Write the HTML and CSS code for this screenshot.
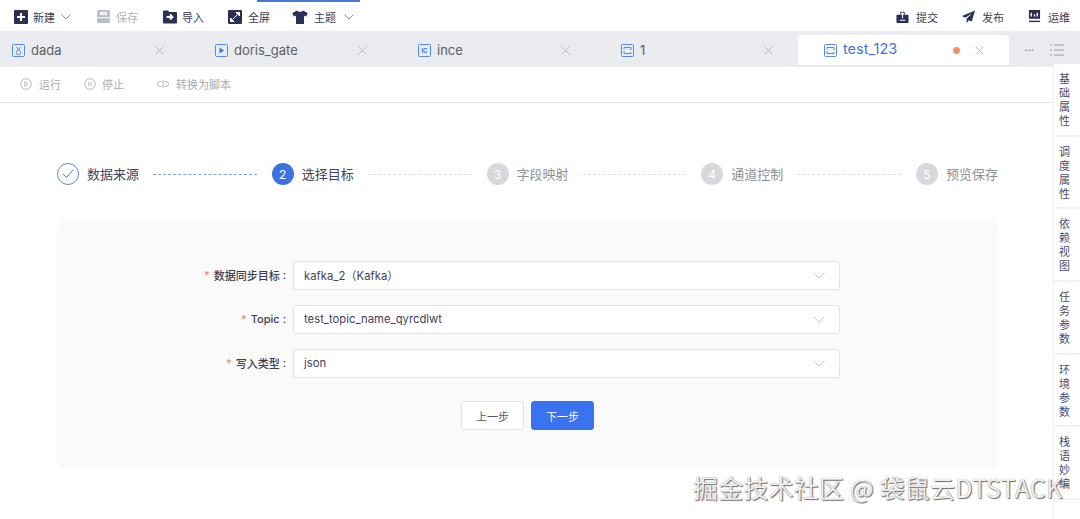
FILE: index.html
```html
<!DOCTYPE html>
<html lang="zh">
<head>
<meta charset="utf-8">
<title>数据同步</title>
<link rel="stylesheet" href="styles.css">
</head>
<body>
<div class="app">
  <div class="top-accent"></div>
  <header class="menubar">
    <div class="menu-group">
      <div class="menu-item m-new">
        <svg class="ic14" viewBox="0 0 14 14"><rect width="14" height="14" rx="1" fill="#2b2f55"/><path d="M7 3v8M3 7h8" stroke="#fff" stroke-width="2"/></svg>
        <span>新建</span>
        <svg class="chev" viewBox="0 0 10 6"><path d="M.5.5 5 5 9.500.5" fill="none" stroke="#8a8c92" stroke-width="1"/></svg>
      </div>
      <div class="menu-item m-save disabled">
        <svg class="ic14 save-ic" viewBox="0 0 14 14"><rect width="14" height="14" rx="1.500" fill="#b9bcc2"/><rect x="3" y="2" width="8" height="3.500" fill="#f0f0f0"/><rect x="0" y="7.500" width="14" height="1.500" fill="#f0f0f0"/></svg>
        <span>保存</span>
      </div>
      <div class="menu-item m-import">
        <svg class="ic14" viewBox="0 0 14 14"><path d="M0 1.500a1 1 0 0 1 1-1h4l1.500 1.500H13a1 1 0 0 1 1 1V12.500a1 1 0 0 1-1 1H1a1 1 0 0 1-1-1z" fill="#2b2f55"/><path d="M3.500 7h5M7 4.500 9.500 7 7 9.500" fill="none" stroke="#fff" stroke-width="1.800"/></svg>
        <span>导入</span>
      </div>
      <div class="menu-item m-full">
        <svg class="ic14" viewBox="0 0 14 14"><rect width="14" height="14" rx="1" fill="#2b2f55"/><path d="M8 2.500h3.500V6L8 2.500zM6 11.500H2.500V8L6 11.500zM9 5 5 9" fill="#fff" stroke="#fff" stroke-width="1"/></svg>
        <span>全屏</span>
      </div>
      <div class="menu-item m-theme">
        <svg class="ic16" viewBox="0 0 16 14"><path d="M5 .5 .3 3l1.500 3.500L4 5.800V14h8V5.800l2.200.7L15.700 3 11 .5C10 2.200 6 2.200 5 .5z" fill="#2b2f55"/></svg>
        <span>主题</span>
        <svg class="chev" viewBox="0 0 10 6"><path d="M.5.5 5 5 9.500.5" fill="none" stroke="#8a8c92" stroke-width="1"/></svg>
      </div>
    </div>
    <div class="menu-group right">
      <div class="menu-item">
        <svg class="ic13" viewBox="0 0 14 14"><path d="M5 2h4l1 3h2.500a1 1 0 0 1 1 1v7a1 1 0 0 1-1 1H1.500a1 1 0 0 1-1-1V6a1 1 0 0 1 1-1H4z" fill="#2b2f55"/><path d="M7 3v6M5 5l2-2 2 2M4 11h6" fill="none" stroke="#fff" stroke-width="1.200"/></svg>
        <span>提交</span>
      </div>
      <div class="menu-item">
        <svg class="ic13" viewBox="0 0 14 14"><path d="M14 .5 0 6.500l3.500 1.800L11 3.500 5 9.500V14l2.500-3 3 1.500z" fill="#2b2f55"/></svg>
        <span>发布</span>
      </div>
      <div class="menu-item">
        <svg class="ic13" viewBox="0 0 14 14"><path d="M1 0h12v9.500H1z" fill="#2b2f55"/><path d="M3.500 3v4M7 4.500V7M10 3v4" stroke="#fff" stroke-width="1.500"/><rect x="1" y="11.500" width="12" height="1.500" fill="#2b2f55"/></svg>
        <span>运维</span>
      </div>
    </div>
  </header>

  <nav class="tabbar">
    <div class="tabs">
      <div class="tab first">
        <svg class="tab-ic" viewBox="0 0 13 13"><rect x=".5" y=".5" width="12" height="12" rx="1" fill="#e4ecfa" stroke="#5d8ad6"/><circle cx="6.500" cy="8.500" r="2.200" fill="none" stroke="#5d8ad6"/><path d="M4.500 3 6.500 6 8.500 3" fill="none" stroke="#5d8ad6"/></svg>
        <span class="tab-name">dada</span>
        <svg class="close" viewBox="0 0 9 9"><path d="M.5.500l8 8M8.500.500l-8 8" stroke="#a9acb2" stroke-width=".8"/></svg>
      </div>
      <div class="tab">
        <svg class="tab-ic" viewBox="0 0 13 13"><rect x=".5" y=".5" width="12" height="12" rx="1" fill="#e4ecfa" stroke="#5d8ad6"/><path d="M4.500 3.500 9 6.500 4.500 9.500z" fill="#3f76d2"/></svg>
        <span class="tab-name">doris_gate</span>
        <svg class="close" viewBox="0 0 9 9"><path d="M.5.500l8 8M8.500.500l-8 8" stroke="#a9acb2" stroke-width=".8"/></svg>
      </div>
      <div class="tab">
        <svg class="tab-ic" viewBox="0 0 13 13"><rect x=".5" y=".5" width="12" height="12" rx="1" fill="#e4ecfa" stroke="#5d8ad6"/><text x="6.500" y="8.600" class="ic-letters">IC</text></svg>
        <span class="tab-name">ince</span>
        <svg class="close" viewBox="0 0 9 9"><path d="M.5.500l8 8M8.500.500l-8 8" stroke="#a9acb2" stroke-width=".8"/></svg>
      </div>
      <div class="tab">
        <svg class="tab-ic" viewBox="0 0 13 13"><rect x=".5" y=".5" width="12" height="12" rx="1" fill="#e4ecfa" stroke="#5d8ad6"/><path d="M3 5V3.500h7V6M10 8v1.500H3V7" fill="none" stroke="#5d8ad6"/></svg>
        <span class="tab-name">1</span>
        <svg class="close" viewBox="0 0 9 9"><path d="M.5.500l8 8M8.500.500l-8 8" stroke="#a9acb2" stroke-width=".8"/></svg>
      </div>
      <div class="tab active">
        <svg class="tab-ic" viewBox="0 0 13 13"><rect x=".5" y=".5" width="12" height="12" rx="1" fill="#eef3fc" stroke="#5d8ad6"/><path d="M3 5V3.500h7V6M10 8v1.500H3V7" fill="none" stroke="#5d8ad6"/></svg>
        <span class="tab-name">test_123</span>
        <span class="dot"></span>
        <svg class="close" viewBox="0 0 9 9"><path d="M.5.500l8 8M8.500.500l-8 8" stroke="#a9acb2" stroke-width=".8"/></svg>
      </div>
    </div>
    <div class="tab-tools">
      <span class="more">···</span>
      <svg class="list-ic" viewBox="0 0 14 12"><path d="M0 1h2M4 1h10M0 6h2M4 6h10M0 11h2M4 11h10" stroke="#9a9ea6" stroke-width="1"/></svg>
    </div>
  </nav>

  <div class="workspace">
    <main class="content">
      <div class="toolbar">
        <div class="tool t-run">
          <svg class="ic12" viewBox="0 0 12 12"><circle cx="6" cy="6" r="5.300" fill="none" stroke="#b4b7bc"/><path d="M4.800 3.800 8 6 4.800 8.200z" fill="none" stroke="#b4b7bc"/></svg>
          <span>运行</span>
        </div>
        <div class="tool t-stop">
          <svg class="ic12" viewBox="0 0 12 12"><circle cx="6" cy="6" r="5.300" fill="none" stroke="#b4b7bc"/><path d="M4.800 4v4M7.200 4v4" stroke="#b4b7bc"/></svg>
          <span>停止</span>
        </div>
        <div class="tool t-conv">
          <svg class="ic12" viewBox="0 0 12 12"><path d="M4.500 3.500H3a2.500 2.500 0 0 0 0 5h1.500M7.500 3.500H9a2.500 2.500 0 0 1 0 5H7.500M6 2v8" fill="none" stroke="#b4b7bc"/></svg>
          <span>转换为脚本</span>
        </div>
      </div>

      <section class="wizard">
        <div class="steps">
          <div class="step done">
            <span class="num"><svg class="check" viewBox="0 0 12 10"><path d="M1 5l3.500 3.500L11 1" fill="none" stroke="#3f76d2" stroke-width="1"/></svg></span>
            <span class="label">数据来源</span>
          </div>
          <div class="line blue"></div>
          <div class="step current"><span class="num">2</span><span class="label">选择目标</span></div>
          <div class="line"></div>
          <div class="step"><span class="num">3</span><span class="label">字段映射</span></div>
          <div class="line"></div>
          <div class="step"><span class="num">4</span><span class="label">通道控制</span></div>
          <div class="line"></div>
          <div class="step"><span class="num">5</span><span class="label">预览保存</span></div>
        </div>

        <div class="panel">
          <div class="form">
            <label class="f-label"><i>*</i>数据同步目标<b>:</b></label>
            <div class="select"><span>kafka_2（Kafka）</span><svg class="sel-arrow" viewBox="0 0 12 7"><path d="M.5.500 6 6 11.500.5" fill="none" stroke="#c8cacf"/></svg></div>
            <label class="f-label"><i>*</i>Topic<b>:</b></label>
            <div class="select"><span>test_topic_name_qyrcdlwt</span><svg class="sel-arrow" viewBox="0 0 12 7"><path d="M.5.500 6 6 11.500.5" fill="none" stroke="#c8cacf"/></svg></div>
            <label class="f-label"><i>*</i>写入类型<b>:</b></label>
            <div class="select"><span>json</span><svg class="sel-arrow" viewBox="0 0 12 7"><path d="M.5.500 6 6 11.500.5" fill="none" stroke="#c8cacf"/></svg></div>
          </div>
          <div class="actions">
            <button class="btn">上一步</button>
            <button class="btn primary">下一步</button>
          </div>
        </div>
      </section>
    </main>

    <aside class="side">
      <div class="side-item">基础属性</div>
      <div class="side-item">调度属性</div>
      <div class="side-item">依赖视图</div>
      <div class="side-item">任务参数</div>
      <div class="side-item">环境参数</div>
      <div class="side-item">栈语妙编</div>
    </aside>
  </div>
  <div class="watermark">掘金技术社区 @ 袋鼠云DTSTACK</div>
</div>
</body>
</html>
```
FILE: styles.css
```css
* { box-sizing: border-box; }
html, body { margin: 0; height: 100%; overflow: hidden; background: #fff; }
body { font-family: Inter, "Noto Sans CJK SC", sans-serif; font-size: 11px; color: #3f4258; }
.app { position: relative; width: 1080px; height: 519px; overflow: hidden; display: flex; flex-direction: column; }
.top-accent { position: absolute; left: 257px; top: 0; width: 103px; height: 2px; background: #4a78d8; }

.menubar { height: 31px; flex: none; display: flex; justify-content: space-between; align-items: center; padding: 2px 10px 0 14px; }
.menu-group { display: flex; align-items: center; }
.menu-item { display: flex; align-items: center; gap: 5px; white-space: nowrap; color: #3a3d55; }
.menu-item.disabled { color: #b0b3b8; }
.m-new { width: 83px; }
.m-save { width: 66px; gap: 6px; }
.m-import { width: 65px; gap: 5px; }
.m-full { width: 64px; gap: 6px; }
.m-theme { gap: 6px; }
.menu-group.right .menu-item { margin-left: 24px; gap: 7px; }
.ic14 { width: 14px; height: 14px; flex: none; }
.ic13 { width: 13px; height: 13px; flex: none; }
.ic16 { width: 16px; height: 14px; flex: none; }
.ic12 { width: 12px; height: 12px; flex: none; }
.save-ic { width: 13px; height: 13px; }
.chev { width: 10px; height: 6px; flex: none; margin-left: 1px; }
.m-theme .chev { margin-left: 2px; }

.tabbar { height: 36px; flex: none; background: #e9ebee; display: flex; align-items: flex-end; justify-content: space-between; padding-bottom: 2px; }
.tabs { display: flex; margin-left: -14px; }
.tab { width: 203px; height: 30px; padding: 0 25px 0 26px; display: flex; align-items: center; font-size: 13px; color: #5d6068; }
.tab.active { width: 211px; background: #fff; color: #3f76d2; border-radius: 3px 3px 0 0; }
.tab.active .tab-name { font-size: 14.500px; line-height: 18px; padding-bottom: 2px; }
.tab-ic { width: 13px; height: 13px; flex: none; margin-right: 6px; }
.ic-letters { font-size: 6px; font-weight: 700; fill: #3f76d2; text-anchor: middle; font-family: Inter, sans-serif; }
.tab-name { flex: 1; white-space: nowrap; }
.close { width: 9px; height: 9px; flex: none; }
.dot { width: 7px; height: 7px; border-radius: 50%; background: #ee9470; margin-right: 15px; flex: none; }
.tab-tools { display: flex; align-items: center; height: 30px; padding-right: 16px; gap: 16px; }
.more { color: #777; font-size: 11px; }
.list-ic { width: 14px; height: 12px; }

.workspace { flex: 1; display: flex; min-height: 0; }
.content { flex: 1; min-width: 0; display: flex; flex-direction: column; }
.toolbar { height: 36px; flex: none; display: flex; align-items: center; padding: 0 0 2px 20px; border-bottom: 1px solid #e7e8ea; color: #a9acb2; }
.tool { display: flex; align-items: center; gap: 7px; }
.t-run { width: 64px; }
.t-stop { width: 73px; gap: 6px; }

.wizard { padding: 60px 55px 0 57px; }
.steps { display: flex; align-items: center; height: 22px; }
.step { display: flex; align-items: center; gap: 8px; flex: none; font-size: 13px; color: #8d9096; }
.label { padding-bottom: 1px; }
.num { width: 22px; height: 22px; border-radius: 50%; background: #d6d8db; color: #fff; display: flex; align-items: center; justify-content: center; font-size: 12px; }
.step.done .num { background: #fff; border: 1px solid #5d8ad6; }
.step.done .label, .step.current .label { color: #3f4258; }
.step.current .num { background: #3a73e0; }
.check { width: 12px; height: 10px; }
.line { flex: 1; margin: 0 15px 0 14px; border-top: 1px dashed #dcdee1; }
.line.blue { border-top-color: #7d9fdc; }

.panel { margin-top: 36px; height: 248px; background: #fafafa; border-radius: 8px; padding-top: 40px; }
.form { display: grid; grid-template-columns: 236px 547px; row-gap: 15px; }
.f-label { height: 29px; display: flex; align-items: center; justify-content: flex-end; padding: 0 7px 1px 0; font-size: 11px; font-weight: 500; color: #3a3d55; white-space: nowrap; }
.f-label i { color: #e58a78; font-style: normal; margin-right: 4px; }
.f-label b { font-weight: 500; margin-left: 3px; }
.select { height: 29px; background: #fff; border: 1px solid #e2e3e6; border-radius: 3px; display: flex; align-items: center; justify-content: space-between; padding: 0 14px 1px 10px; font-size: 11.300px; color: #3f4258; }
.sel-arrow { width: 12px; height: 7px; }
.actions { display: flex; justify-content: center; gap: 7px; margin-top: 23px; }
.btn { width: 63px; height: 29px; border: 1px solid #e2e3e6; border-radius: 3px; background: #fff; font: inherit; color: #555861; padding: 0; }
.btn.primary { background: #3a73f0; border-color: #3a73f0; color: #fff; }

.side { width: 27px; flex: none; margin-top: -3px; border-left: 1px solid #f0f0f2; background: #fff; position: relative; }
.side-item { height: 72.700px; padding: 8px 10px 0 5px; line-height: 14px; font-size: 11px; color: #4a4d68; border-bottom: 2px solid #f2f2f4; }

.watermark { position: absolute; left: 693px; top: 469px; font-family: "Noto Sans CJK SC", sans-serif; font-size: 25px; letter-spacing: .2px; line-height: 37px; color: rgba(255,255,255,.92); text-shadow: 1px 1px 1px rgba(0,0,0,.55), 0 0 1px rgba(0,0,0,.5); white-space: nowrap; }
```
